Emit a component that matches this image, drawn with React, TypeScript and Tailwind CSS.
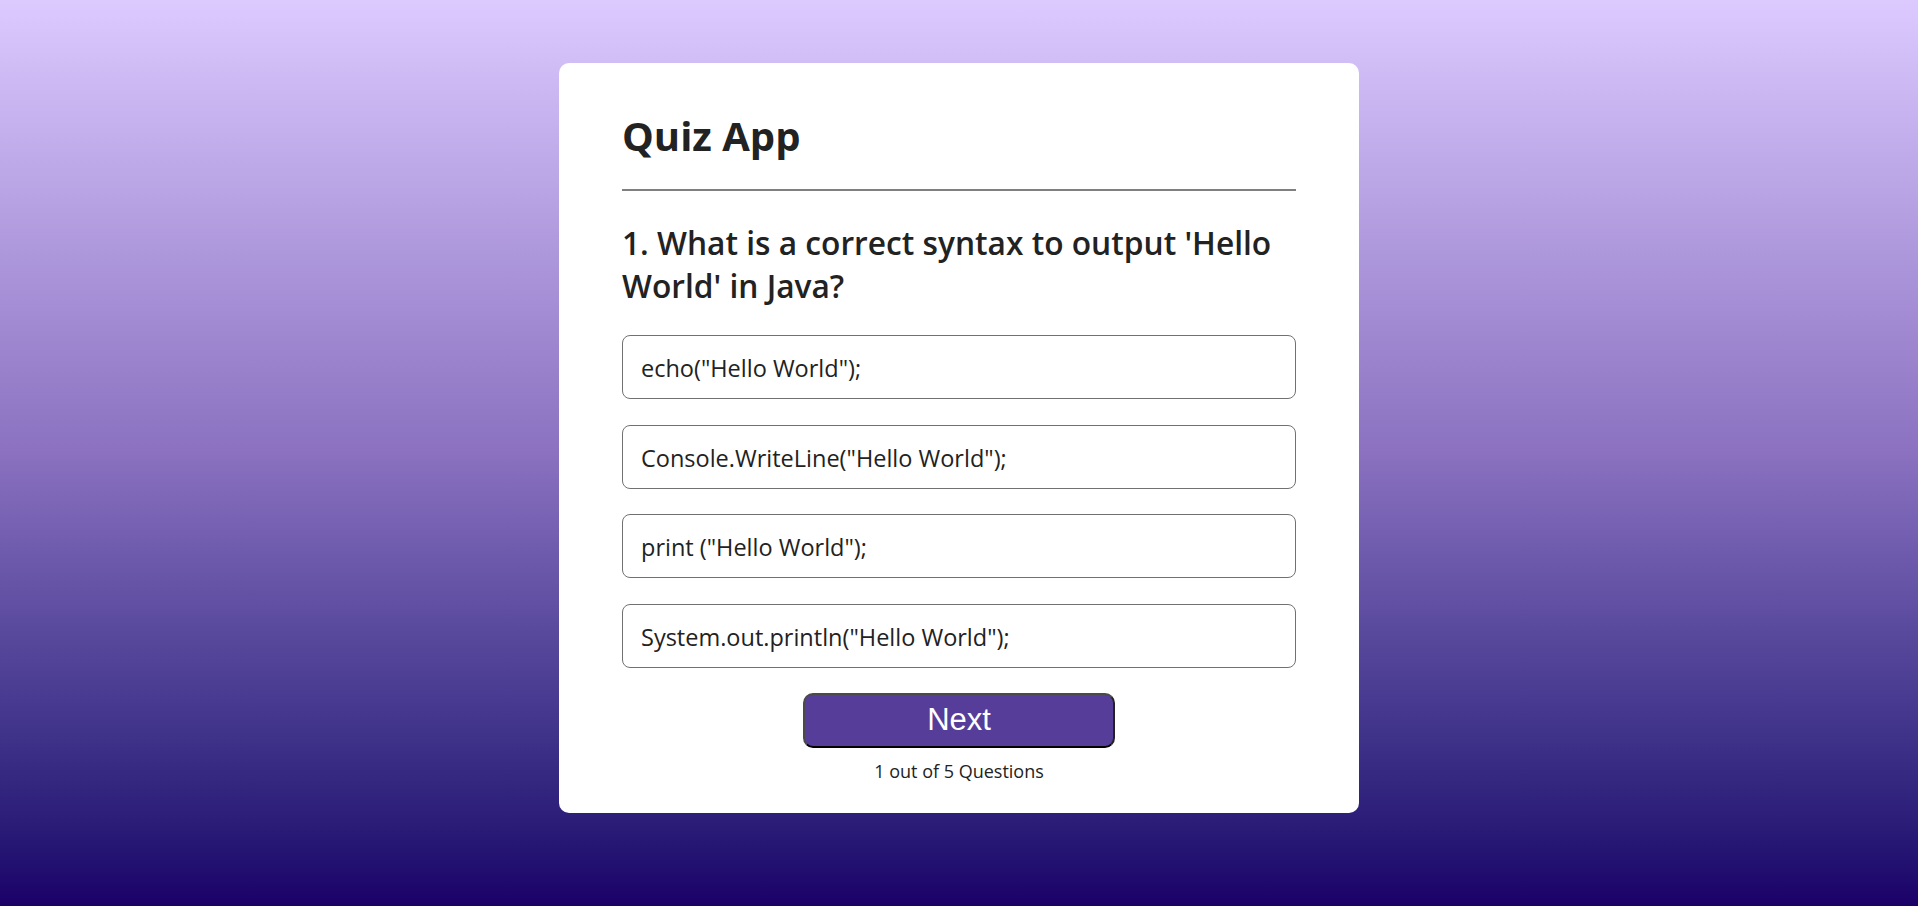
const options = [
  'echo("Hello World");',
  'Console.WriteLine("Hello World");',
  'print ("Hello World");',
  'System.out.println("Hello World");',
];

export default function App() {
  return (
    <div className="min-h-screen w-full bg-gradient-to-b from-[#dccaff] via-[#8b71c0] to-[#1b0068] pt-[63px] pb-[93px] font-['Open_Sans','Noto_Sans',sans-serif] text-[#222]">
      <div className="mx-auto w-[800px] rounded-[10px] bg-white px-[63px] pt-[44px] pb-[29px]">
        <h1 className="text-[40px] font-bold leading-[57px]">Quiz App</h1>
        <hr className="mt-[25px] border-0 border-t-2 border-[#808080]" />

        <h2 className="mt-[30px] text-[31.7px] font-semibold leading-[43px]">
          1. What is a correct syntax to output 'Hello World' in Java?
        </h2>

        <ul className="mt-[28px] flex flex-col gap-[25.7px]">
          {options.map((o) => (
            <li
              key={o}
              className="h-[64px] rounded-[8px] border-[1.3px] border-[#717171] px-[18px] pt-[16px] text-[23.5px] leading-[32px]"
            >
              {o}
            </li>
          ))}
        </ul>

        <div className="mt-[25px] flex flex-col items-center">
          <button className="flex h-[55px] w-[312px] items-center justify-center rounded-[10px] border-2 border-[#4a4a4a] border-b-black border-r-[#222] bg-[#553d99] font-['Liberation_Sans',Arial,sans-serif] text-[31px] text-white">
            Next
          </button>
          <div className="mt-[11px] text-[18px] leading-[25px] text-[#222]">1 out of 5 Questions</div>
        </div>
      </div>
    </div>
  );
}
